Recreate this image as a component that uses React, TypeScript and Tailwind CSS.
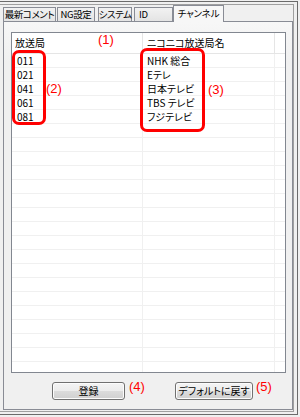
import React from 'react';

const jp = "font-['Noto_Sans_CJK_JP',sans-serif] [font-feature-settings:'palt']";

const channels = [
  { id: '011', name: 'NHK 総合' },
  { id: '021', name: 'Eテレ' },
  { id: '041', name: '日本テレビ' },
  { id: '061', name: 'TBS テレビ' },
  { id: '081', name: 'フジテレビ' },
];

const tabs = [
  { label: '最新コメント', cls: 'w-[53px]' },
  { label: 'NG設定', cls: 'w-[38px] ml-[1px]' },
  { label: 'システム', cls: 'w-[34px] ml-[3px]' },
  { label: 'ID', cls: 'w-[39px] ml-[2px] justify-start pl-[4px]' },
];

const Note: React.FC<{ text: string; className: string }> = ({ text, className }) => (
  <span className={`absolute text-[13px] leading-none text-[#ff0000] font-['Liberation_Sans',sans-serif] ${className}`}>
    {text}
  </span>
);

const WinButton: React.FC<{ label: string; className: string }> = ({ label, className }) => (
  <button
    className={`h-[18px] rounded-[3px] border border-[#707070] bg-[linear-gradient(#f4f4f4,#ececec_50%,#dcdcdc_50%,#d0d0d0)] shadow-[inset_0_0_0_1px_#fcfcfc] text-[10px] leading-none text-black whitespace-nowrap ${className}`}
  >
    {label}
  </button>
);

const App: React.FC = () => {
  const rows = Array.from({ length: 23 }, (_, i) => channels[i]);

  return (
    <div className={`relative w-[300px] h-[417px] bg-[#f0f0f0] pt-px pr-[2px] pb-[2px] overflow-hidden ${jp}`}>
      <div className="h-full border-t border-r border-b border-[#6b6b6b] pt-[2px] pr-[3px] pb-[2px]">
        <div className="h-full border-t border-r border-b border-[#a0a0a0] pl-[3px] pb-px flex flex-col">
          {/* tab strip */}
          <div className="h-[16px] flex items-end">
            {tabs.map(t => (
              <div
                key={t.label}
                className={`h-[14px] flex items-center justify-center border-t border-l border-r border-[#898c95] bg-[linear-gradient(#f2f2f2,#e4e4e4)] text-[9.5px] tracking-[-0.4px] leading-none text-black whitespace-nowrap ${t.cls}`}
              >
                {t.label}
              </div>
            ))}
            <div className="relative z-10 -mb-px w-[51px] h-[17px] flex items-center justify-center border-t border-l border-r border-[#898c95] bg-[#f7f7f7] text-[9.5px] tracking-[-0.2px] leading-none text-black whitespace-nowrap">
              チャンネル
            </div>
          </div>

          {/* tab page */}
          <div className="flex-1 flex flex-col border border-[#898c95] bg-[linear-gradient(#f7f7f7,#f0f0f0_40px)]">
            <div className="mt-[10px] ml-[7px] mr-[6px] h-[341px] border border-[#828790] bg-white overflow-hidden">
              <div className="flex h-[21px] border-b border-[#e5e5e5] text-[10px] leading-none text-black">
                <div className="w-[131px] flex items-center pl-[3px] border-r border-[#e5e5e5]">放送局</div>
                <div className="w-[132px] flex items-center pl-[4px] border-r border-[#e5e5e5] whitespace-nowrap">ニコニコ放送局名</div>
                <div className="flex-1" />
              </div>
              {rows.map((r, i) => (
                <div key={i} className="flex h-[14px] border-b border-[#f0f0f0] text-[10px] leading-none text-black">
                  <div className="w-[131px] flex items-center pl-[5px] border-r border-[#f0f0f0]">{r?.id}</div>
                  <div className="w-[132px] flex items-center pl-[4px] border-r border-[#f0f0f0] whitespace-nowrap">{r?.name}</div>
                  <div className="flex-1" />
                </div>
              ))}
            </div>

            <div className="mt-[9px] flex">
              <WinButton label="登録" className="ml-[48px] w-[73px]" />
              <WinButton label="デフォルトに戻す" className="ml-[50px] w-[78px]" />
            </div>
          </div>
        </div>
      </div>

      {/* annotations */}
      <div className="absolute left-[12px] top-[50px] w-[34px] h-[75px] border-[3px] border-[#ff0000] rounded-[7px]" />
      <div className="absolute left-[140px] top-[48px] w-[65px] h-[84px] border-[3px] border-[#ff0000] rounded-[7px]" />
      <Note text="(1)" className="left-[98px] top-[33px]" />
      <Note text="(2)" className="left-[46px] top-[82px]" />
      <Note text="(3)" className="left-[208px] top-[83px]" />
      <Note text="(4)" className="left-[129px] top-[380px]" />
      <Note text="(5)" className="left-[256px] top-[380px]" />
    </div>
  );
};

export default App;
